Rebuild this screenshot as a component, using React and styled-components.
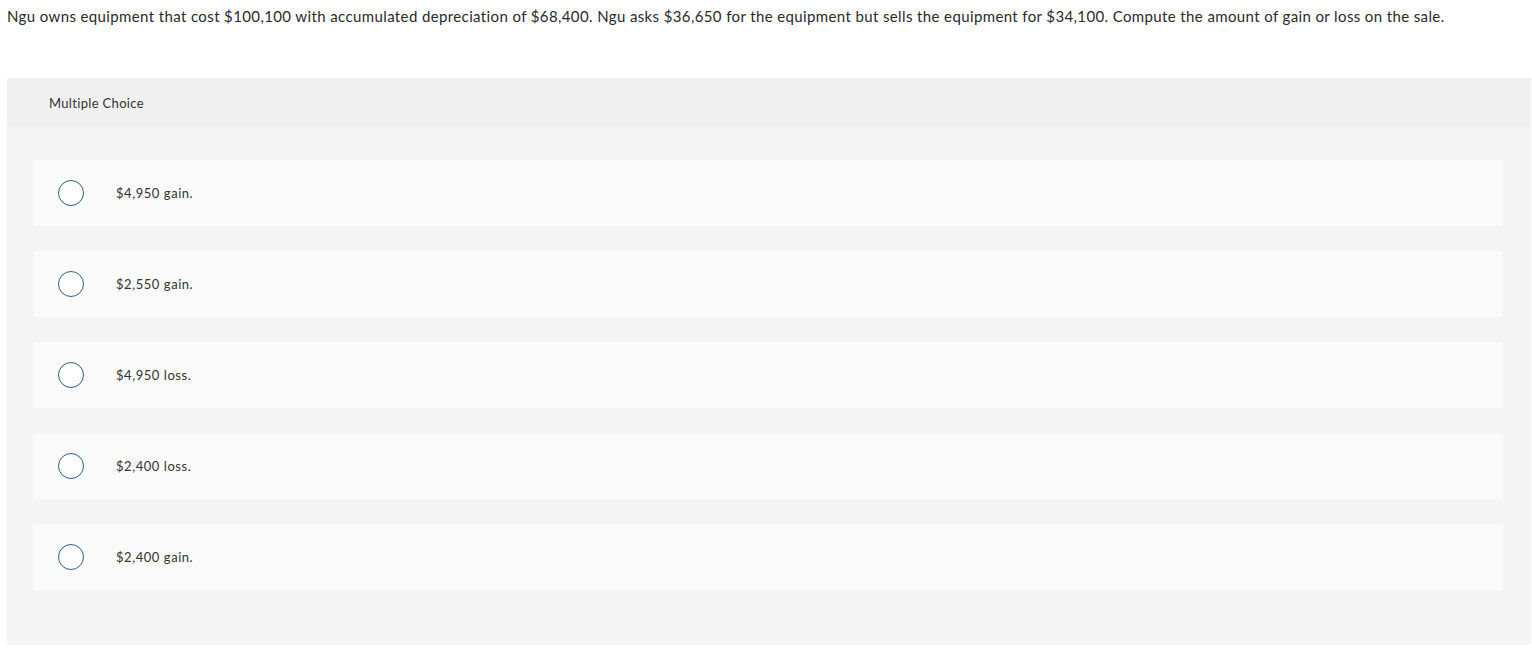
import React from "react";
import styled, { createGlobalStyle } from "styled-components";

const Global = createGlobalStyle`
  html, body { margin: 0; padding: 0; background: #fff; }
  body { font-family: Lato, "Open Sans", Arial, sans-serif; color: #333; }
`;

const Page = styled.div`
  padding: 6px 1px 18px 7px;
`;

const Question = styled.p`
  margin: 0;
  font-size: 15px;
  letter-spacing: 0.38px;
  line-height: 20px;
  color: #2a2a2a;
`;

const Panel = styled.section`
  margin-top: 52px;
  background: #f4f4f4;
  border-radius: 3px;
  overflow: hidden;
`;

const Header = styled.div`
  height: 49px;
  background: #f0f0f0;
  display: flex;
  align-items: center;
  padding-left: 42px;
  font-size: 13px;
  letter-spacing: 0.33px;
  color: #333;
`;

const List = styled.div`
  display: flex;
  flex-direction: column;
  gap: 25px;
  padding: 33px 28px 55px 26px;
`;

const Option = styled.label`
  display: flex;
  align-items: center;
  height: 66px;
  background: #fafafa;
  border-radius: 2px;
  padding-left: 25px;
  cursor: pointer;
`;

const Radio = styled.span`
  width: 24px;
  height: 24px;
  border: 1.5px solid #2c5d8f;
  border-radius: 50%;
  background: #fff;
  flex: none;
`;

const OptionText = styled.span`
  margin-left: 32px;
  font-size: 13px;
  letter-spacing: 0.55px;
  color: #333;
`;

const options = [
  "$4,950 gain.",
  "$2,550 gain.",
  "$4,950 loss.",
  "$2,400 loss.",
  "$2,400 gain.",
];

export default function App() {
  return (
    <>
      <Global />
      <Page>
        <Question>
          Ngu owns equipment that cost $100,100 with accumulated depreciation of $68,400. Ngu asks $36,650 for the equipment but sells the equipment for $34,100. Compute the amount of gain or loss on the sale.
        </Question>
        <Panel>
          <Header>Multiple Choice</Header>
          <List>
            {options.map((o) => (
              <Option key={o}>
                <Radio />
                <OptionText>{o}</OptionText>
              </Option>
            ))}
          </List>
        </Panel>
      </Page>
    </>
  );
}
